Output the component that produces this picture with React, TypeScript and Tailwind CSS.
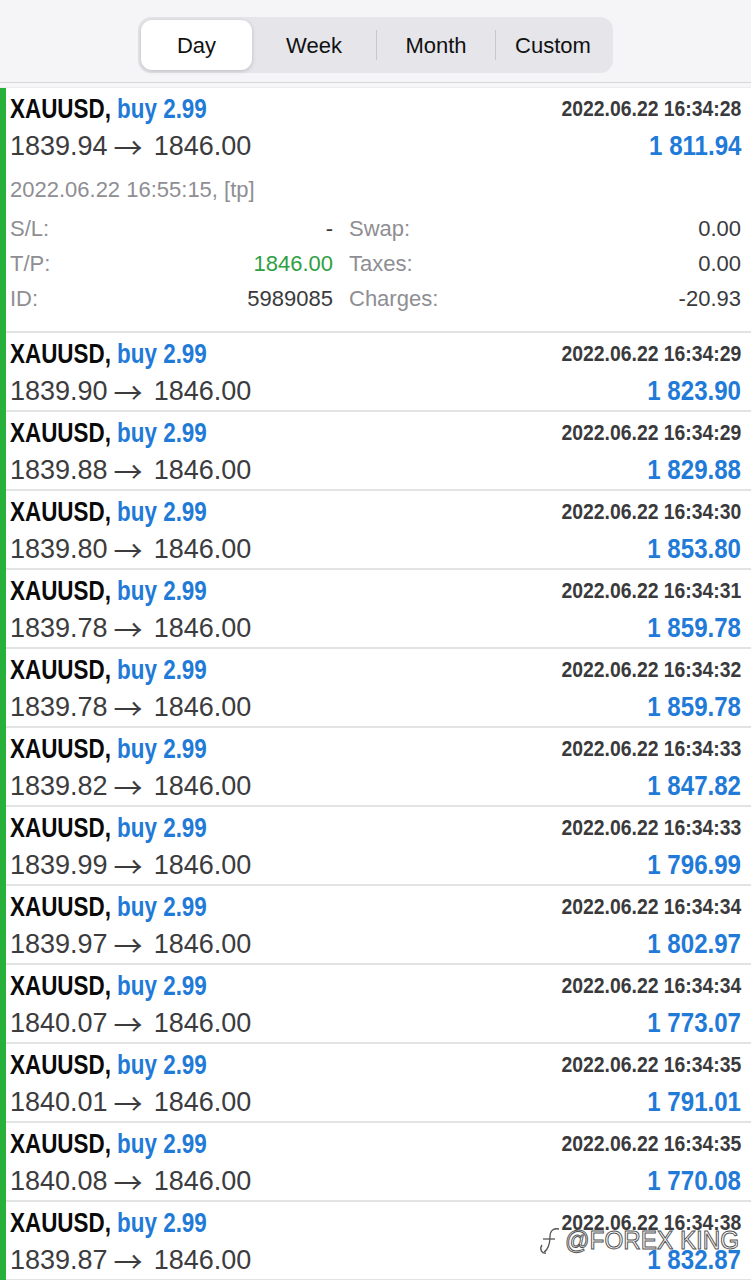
import React from "react";

type Row = { open: string; time: string; profit: string };

const rows: Row[] = [
  { open: "1839.90", time: "2022.06.22 16:34:29", profit: "1 823.90" },
  { open: "1839.88", time: "2022.06.22 16:34:29", profit: "1 829.88" },
  { open: "1839.80", time: "2022.06.22 16:34:30", profit: "1 853.80" },
  { open: "1839.78", time: "2022.06.22 16:34:31", profit: "1 859.78" },
  { open: "1839.78", time: "2022.06.22 16:34:32", profit: "1 859.78" },
  { open: "1839.82", time: "2022.06.22 16:34:33", profit: "1 847.82" },
  { open: "1839.99", time: "2022.06.22 16:34:33", profit: "1 796.99" },
  { open: "1839.97", time: "2022.06.22 16:34:34", profit: "1 802.97" },
  { open: "1840.07", time: "2022.06.22 16:34:34", profit: "1 773.07" },
  { open: "1840.01", time: "2022.06.22 16:34:35", profit: "1 791.01" },
  { open: "1840.08", time: "2022.06.22 16:34:35", profit: "1 770.08" },
  { open: "1839.87", time: "2022.06.22 16:34:38", profit: "1 832.87" },
];

function TopLine({ time }: { time: string }) {
  return (
    <div className="flex items-center justify-between h-[40px] whitespace-nowrap">
      <div className="text-[27px] font-bold leading-none inline-block origin-left scale-x-[0.83]">
        <span className="text-[#0a0a0a]">XAUUSD,</span>{" "}
        <span className="text-[#1f7ad8]">buy 2.99</span>
      </div>
      <div className="text-[22px] font-bold leading-none text-[#3a3a3c] inline-block origin-right scale-x-[0.88]">
        {time}
      </div>
    </div>
  );
}

function SecondLine({ open, profit }: { open: string; profit: string }) {
  return (
    <div className="flex items-center justify-between h-[34px] whitespace-nowrap">
      <div className="text-[27px] leading-none text-[#3c3c3e] flex items-center">
        <span>{open}</span>
        <span className="font-['Noto_Sans_CJK_JP',sans-serif] text-[29px] ml-[6px] mr-[11px] relative top-[0px]">
          →
        </span>
        <span>1846.00</span>
      </div>
      <div className="text-[28px] font-bold leading-none text-[#1f7ad8] inline-block origin-right scale-x-[0.86]">
        {profit}
      </div>
    </div>
  );
}

function Detail({ label, value, green }: { label: string; value: string; green?: boolean }) {
  return (
    <div className="flex items-center justify-between h-[35px]">
      <span className="text-[#8e8e93]">{label}</span>
      <span className={green ? "text-[#2ea043]" : "text-[#3a3a3c]"}>{value}</span>
    </div>
  );
}

export default function App() {
  return (
    <div className="w-[751px] h-[1280px] overflow-hidden bg-white relative font-['Liberation_Sans',Arial,sans-serif]">
      {/* header */}
      <div className="h-[83px] bg-[#f5f5f7] border-b border-[#d8d8dc] flex justify-center pt-[17px]">
        <div className="h-[56px] w-[475px] bg-[#e5e5ea] rounded-[13px] p-[3px] flex items-center text-[22px] text-[#111]">
          <div className="w-[111px] h-[50px] bg-white rounded-[11px] shadow-[0_1px_4px_rgba(0,0,0,0.18)] flex items-center justify-center">
            Day
          </div>
          <div className="w-[124px] flex items-center justify-center">Week</div>
          <div className="w-px h-[30px] bg-[#c7c7cc]" />
          <div className="w-[118px] flex items-center justify-center">Month</div>
          <div className="w-px h-[30px] bg-[#c7c7cc]" />
          <div className="flex-1 flex items-center justify-center">Custom</div>
        </div>
      </div>
      <div className="h-[5px] bg-[#f7f7f8] border-b border-[#ececee]" />

      {/* list */}
      <div className="flex">
        <div className="w-[6px] bg-[#27b03a] shrink-0" />
        <div className="flex-1">
          {/* expanded row */}
          <div className="pl-[4px] pr-[10px] border-b-2 border-[#e3e3e6] h-[245px] pt-[1px]">
            <TopLine time="2022.06.22 16:34:28" />
            <SecondLine open="1839.94" profit="1 811.94" />
            <div className="text-[22px] text-[#8e8e93] h-[48px] flex items-center pt-[4px]">
              2022.06.22 16:55:15, [tp]
            </div>
            <div className="grid grid-cols-[323px_1fr] gap-x-[16px] text-[22px]">
              <div>
                <Detail label="S/L:" value="-" />
                <Detail label="T/P:" value="1846.00" green />
                <Detail label="ID:" value="5989085" />
              </div>
              <div>
                <Detail label="Swap:" value="0.00" />
                <Detail label="Taxes:" value="0.00" />
                <Detail label="Charges:" value="-20.93" />
              </div>
            </div>
          </div>
          {rows.map((r, i) => (
            <div key={i} className="pl-[4px] pr-[10px] h-[79px] border-b-2 border-[#e3e3e6] pt-[1px]">
              <TopLine time={r.time} />
              <SecondLine open={r.open} profit={r.profit} />
            </div>
          ))}
        </div>
      </div>

      {/* watermark */}
      <div className="absolute left-[538px] top-[1224px] flex items-center gap-[1px] pointer-events-none whitespace-nowrap">
        <svg width="26" height="32" viewBox="0 0 26 32" fill="none" stroke="#555" strokeWidth="1.3">
          <path d="M6 28 C10 26 12 19 12 13 C12 6 16 4 21 5" />
          <path d="M5 15 H17" />
          <path d="M4 21 C1 25 4 30 8 29" />
        </svg>
        <span
          className="text-[25px] text-white leading-none inline-block origin-left scale-x-[0.97]"
          style={{ WebkitTextStroke: "1px #555" }}
        >
          @FOREX KING
        </span>
      </div>
    </div>
  );
}
